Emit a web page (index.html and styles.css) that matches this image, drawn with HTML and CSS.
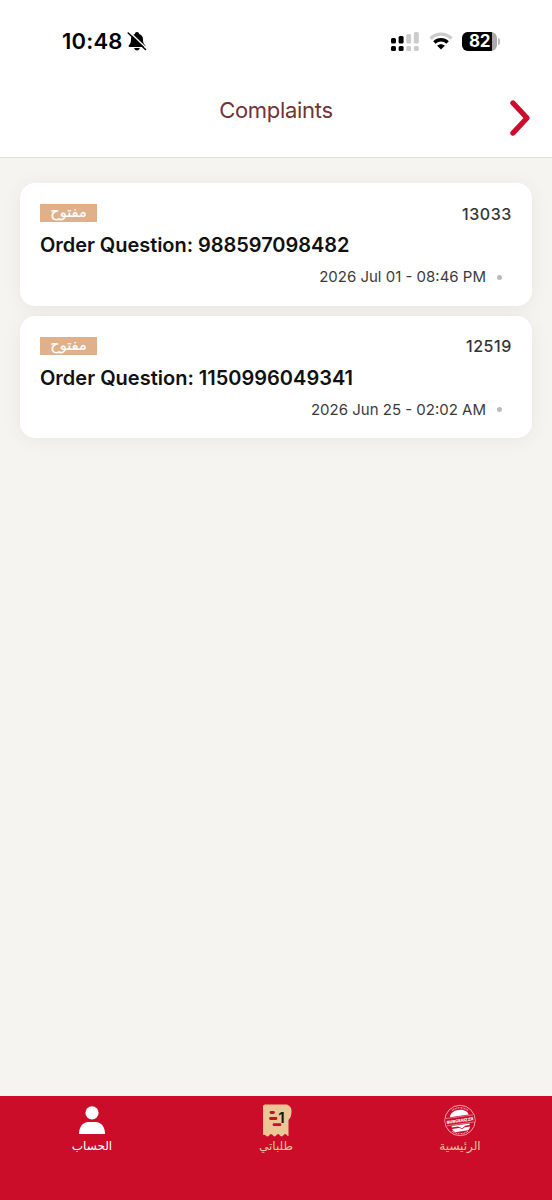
FILE: index.html
```html
<!DOCTYPE html>
<html lang="en">
<head>
<meta charset="utf-8">
<meta name="viewport" content="width=device-width, initial-scale=1">
<title>Complaints</title>
<link rel="stylesheet" href="styles.css">
</head>
<body>
<div class="screen">
  <div class="status">
    <span class="time">10:48</span>
    <svg class="bell" width="20" height="20" viewBox="0 0 20 20">
      <path d="M10 1c-1.300 0-2 .8-2.100 1.900C5.500 3.700 4 5.500 4 8c0 4-.8 4.700-2.200 6.300-.6.800-.1 1.700.9 1.700h14.600c1 0 1.500-.9.900-1.700C16.800 12.700 16 12 16 8c0-2.500-1.500-4.300-3.900-5.100C12 1.800 11.300 1 10 1zM7.200 17h5.600c-.3 1.500-1.300 2.400-2.800 2.400S7.500 18.500 7.200 17z"/>
      <path d="M2.300.8 20 17.700" stroke="#fff" stroke-width="1.500"/>
      <path d="M1.200 2 18.500 18.500" stroke="#000" stroke-width="1.600" stroke-linecap="round"/>
    </svg>
    <svg class="signal" width="28" height="19" viewBox="0 0 28 19">
      <rect x="0" y="6" width="5" height="5.500" rx="1.500"/><rect x="0" y="14" width="5" height="5" rx="1.500"/>
      <rect x="7.600" y="4" width="5" height="7.500" rx="1.500"/><rect x="7.600" y="14" width="5" height="5" rx="1.500"/>
      <g fill="#ccc"><rect x="15.200" y="2" width="5" height="9.500" rx="1.500"/><rect x="15.200" y="14" width="5" height="5" rx="1.500"/><rect x="22.800" y="0" width="5" height="11.500" rx="1.500"/><rect x="22.800" y="14" width="5" height="5" rx="1.500"/></g>
    </svg>
    <svg class="wifi" width="24" height="18" viewBox="0 0 24 18">
      <path d="M1.500 6.500C7.500.6 16.500.6 22.500 6.500" fill="none" stroke="#ccc" stroke-width="3.400"/>
      <path d="M5.400 10.500c3.700-3.600 9.500-3.600 13.200 0" fill="none" stroke="#000" stroke-width="3.400"/>
      <path d="M8.200 13.800c2.200-2 5.400-2 7.600 0L12 17.600z"/>
    </svg>
    <span class="battery"><span class="level">82</span></span><i class="nub"></i>
  </div>
  <header class="header">
    <h1>Complaints</h1>
    <svg class="chevron" width="24" height="40" viewBox="0 0 24 40"><path d="m5 5 14 15L5 35"/></svg>
  </header>
  <main class="list">
    <article class="card">
      <div class="row"><span class="badge" lang="ar" dir="rtl">مفتوح</span><span class="number">13033</span></div>
      <h2 class="tight">Order Question: 988597098482</h2>
      <div class="date"><span>2026 Jul 01 - 08:46 PM</span><i></i></div>
    </article>
    <article class="card">
      <div class="row"><span class="badge" lang="ar" dir="rtl">مفتوح</span><span class="number">12519</span></div>
      <h2>Order Question: 1150996049341</h2>
      <div class="date"><span>2026 Jun 25 - 02:02 AM</span><i></i></div>
    </article>
  </main>
  <nav class="tabs">
    <div class="tab active">
      <svg width="34" height="34" viewBox="0 0 34 34"><circle cx="17" cy="9.800" r="6.600"/><path d="M4 31c0-7 3.500-12 9.500-12h7c6 0 9.500 5 9.500 12z"/></svg>
      <span lang="ar" dir="rtl">الحساب</span>
    </div>
    <div class="tab">
      <svg width="34" height="34" viewBox="0 0 34 34"><path d="M6 1.500h22c2.500 1 4.500 3 4.500 6s-.2 3.500-.7 6c-.5 2-2.300 2.300-2.300 4.200V33c-1.700 0-1.800-2-3.400-2s-1.800 2.500-3.500 2.500-1.800-2.500-3.500-2.500-1.800 2.500-3.500 2.500-1.800-2.500-3.500-2.500-1.800 2.500-3.500 2.500S6 31 4 32V3.500C4 2.400 4.900 1.500 6 1.500z"/><path d="M12 9.500h2.500M11.500 15.500H17M15 21.700H21" stroke="#c90d2b" stroke-width="2.800" stroke-linecap="round"/><text x="19.500" y="19.500">1</text></svg>
      <span lang="ar" dir="rtl">طلباتي</span>
    </div>
    <div class="tab">
      <svg width="34" height="34" viewBox="0 0 34 34">
        <circle cx="17" cy="17.500" r="15.200" fill="none" stroke="#f2cdd0" stroke-width=".8"/>
        <path d="M9 7.500a13 13 0 0 1 16 0M9 28a13 13 0 0 0 16 0" fill="none" stroke="#efabb2" stroke-width="1.200" stroke-dasharray="1 .6"/>
        <g transform="rotate(-8 17 17.500)" fill="#fff"><path d="M7.500 12.900C9 4.800 25 4.800 26.500 12.900zM8 21.700h18v1.500h-4l-4 2.300-4-2.300H8zM8 24.800h7l3 1.500 3-1.500h5c-.5 2.400-2 3.600-4 3.600H12c-2 0-3.500-1.200-4-3.600z"/><path d="M2.500 13.700h29v7.200h-29z" fill="#c90d2b"/><path d="M3 13.700h28M3 20.900h28" stroke="#f6cdd1" stroke-width=".5"/><text class="logo-text" x="17" y="19.100" text-anchor="middle">BURGERIZZR</text></g>
      </svg>
      <span lang="ar" dir="rtl">الرئيسية</span>
    </div>
  </nav>
</div>
</body>
</html>
```
FILE: styles.css
```css
* { box-sizing: border-box; }
body { margin: 0; font-family: Inter, "Noto Sans", sans-serif; background: #f5f4f0; }
.screen { height: 1200px; display: flex; flex-direction: column; }
.status { height: 82px; background: #fff; display: flex; align-items: center; padding-left: 62px; }
.time { width: 65px; font-size: 22px; font-weight: 600; letter-spacing: 0.2px; }
.bell { flex: none; }
.signal { margin-left: 244px; }
.wifi { margin-left: 10px; }
.battery { width: 35px; height: 19px; margin-left: 9px; border-radius: 6px; overflow: hidden; background: #aaa; }
.level { display: block; width: 30px; height: 19px; background: #000; color: #fff; font: 700 17px/19px Inter, sans-serif; padding-left: 7px; letter-spacing: -0.3px; }
.nub { width: 2px; height: 7px; margin-left: 1px; background: #bbb; border-radius: 0 2px 2px 0; }
.header { height: 76px; background: #fff; border-bottom: 1px solid #dededc; display: grid; grid-template-columns: 45px 1fr 45px; align-items: start; }
.header h1 { grid-column: 2; margin: 15px 0 0; text-align: center; font-size: 22px; line-height: 27px; font-weight: 400; letter-spacing: -0.3px; color: #713334; }
.chevron { margin: 16px 0 0 1px; }
.chevron path { fill: none; stroke: #c90d2b; stroke-width: 5.4; stroke-linecap: round; stroke-linejoin: round; }
.list { flex: 1; padding: 25px 20px; display: flex; flex-direction: column; gap: 10px; }
.card { height: 122.500px; border-radius: 15px; background: #fff; padding: 20px; box-shadow: 0 2px 18px rgba(80, 75, 55, .07); }
.row { height: 20px; display: flex; justify-content: space-between; align-items: center; }
.badge { width: 57px; height: 18px; background: #dfb08a; color: #fff; font: 14.5px/17px "DejaVu Sans", sans-serif; -webkit-text-stroke: .2px #fff; text-align: center; overflow: hidden; }
.number { font-size: 16px; line-height: 20px; padding-top: 1px; font-weight: 500; color: #333; letter-spacing: .6px; }
.card h2 { margin: 9px 0 0; font-size: 20px; line-height: 26px; font-weight: 600; color: #111; white-space: nowrap; }
.card .tight { letter-spacing: -.05px; }
.date { margin-top: 9px; padding-right: 10px; display: flex; justify-content: flex-end; align-items: center; gap: 11px; font-size: 15px; line-height: 20px; color: #3b3b3b; }
.date i { width: 5px; height: 5px; border-radius: 50%; background: #bbb; }
.tabs { height: 104px; background: #cb0d2a; display: grid; grid-template-columns: repeat(3, 1fr); padding-top: 7px; }
.tab { display: flex; flex-direction: column; align-items: center; color: #e6c698; font: 12px/18px "DejaVu Sans", sans-serif; }
.tab > svg { fill: #ebc796; flex: none; }
.tab.active { color: #fff; }
.tab.active > svg { fill: #fff; }
.tab text { font: 700 14px Inter, sans-serif; fill: #171717; }
.tab .logo-text { font: 800 4.2px Inter, sans-serif; fill: #fff; }
```
